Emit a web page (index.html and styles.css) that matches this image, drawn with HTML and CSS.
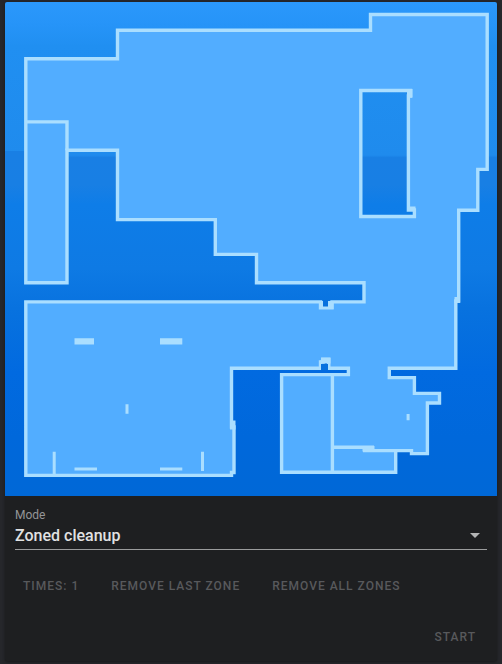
FILE: index.html
```html
<!DOCTYPE html>
<html lang="en">
<head>
<meta charset="utf-8">
<meta name="viewport" content="width=device-width, initial-scale=1">
<title>Vacuum map</title>
<link rel="stylesheet" href="styles.css">
</head>
<body>
<main class="card">
  <svg class="map" viewBox="5 2 492 494" role="img" aria-label="Floor map">
    <defs>
      <linearGradient id="floor" gradientUnits="userSpaceOnUse" x1="0" y1="2" x2="0" y2="496">
        <stop offset="0" stop-color="#2b98fb"/>
        <stop offset=".045" stop-color="#2694f8"/>
        <stop offset=".09" stop-color="#208ff1"/>
        <stop offset=".31" stop-color="#1f8bed"/>
        <stop offset=".315" stop-color="#197fe4"/>
        <stop offset=".37" stop-color="#187fe4"/>
        <stop offset=".41" stop-color="#0e7de8"/>
        <stop offset=".54" stop-color="#0e7ae4"/>
        <stop offset=".62" stop-color="#0872df"/>
        <stop offset=".75" stop-color="#016ae0"/>
        <stop offset=".88" stop-color="#0068db"/>
        <stop offset="1" stop-color="#0068d7"/>
      </linearGradient>
    </defs>
    <rect x="5" y="2" width="492" height="494" fill="url(#floor)"/>
    <path d="M5 151H26V158H5Z" fill="#197fe4"/>
    <g class="rooms">
      <path fill-rule="evenodd" d="M25.8 58.7H117.5V30.2H370.5V14.5H487.2V169.4H477.8V210.3H458.7V301H455.8V368.3H389.3V377.6H414.4V393.4H439.5V403H427.4V453.6H411.5V450.6H395.7V472.2H281.6V374.6H348.4V368.3H328.8V359.5H323V362H320.5V368.3H231.5V427H234V472.5H231.5V475.4H25.8V301.9H320.5V307.8H332V301.9H364V282.8H256.5V254.4H215.3V219.6H117.5V150.3H67V282.8H25.8Z M360.8 90.5H410.5V96H408.4V210H414.4V216.5H360.8Z"/>
      <path class="wall" d="M25.8 121.9H67V150.3M332.4 374.6V472.2M332.4 447.2H374M363 450.6H395.7"/>
    </g>
    <g class="marks">
      <path d="M320 301H323V306.500H328V301H333.500V309H319.500V301Z"/>
      <path d="M321 357.500H330.500V363.500H328V363.500H320V360.500H321Z"/>
      <path d="M407 89H412.500V97.500H407ZM407 206.500H415.500V211H407ZM454.500 297H460V303H454.500ZM230 420.500H235.500V429.500H230ZM362.500 446H374.500V451.500H362.500Z"/>
      <path d="M74.500 338.300H94V344.500H74.500ZM160 338.300H182.300V344.500H160ZM125.500 404.300H128.500V413.700H125.500ZM52.700 451.700H55.700V475H52.700ZM201 451.700H204V471H201ZM74.500 467.600H97V470.600H74.500ZM160 467.600H182.300V470.600H160ZM406.600 414H409.600V420.300H406.600Z"/>
    </g>
    <path d="M323 300H328V306.500H323ZM321 364H328V370H321Z" class="door"/>
  </svg>
  <form class="controls">
    <label class="label" for="mode">Mode</label>
    <div class="field">
      <select id="mode" class="select">
        <option>Zoned cleanup</option>
      </select>
      <svg class="arrow" viewBox="0 0 10 5" aria-hidden="true"><path d="M0 0H10L5 5Z"/></svg>
    </div>
    <div class="actions">
      <button class="button" type="button" disabled>TIMES: 1</button>
      <button class="button" type="button" disabled>REMOVE LAST ZONE</button>
      <button class="button" type="button" disabled>REMOVE ALL ZONES</button>
    </div>
    <div class="actions actions-end">
      <button class="button" type="button" disabled>START</button>
    </div>
  </form>
</main>
</body>
</html>
```
FILE: styles.css
```css
* {
  box-sizing: border-box;
}

body {
  margin: 0;
  padding: 2px 5px 4px;
  background: #26272b;
  font-family: Roboto, "Liberation Sans", sans-serif;
}

.card {
  overflow: hidden;
  border-radius: 2px;
  background: #1e1f21;
  box-shadow: 0 1px 3px #17181a;
}

.map {
  display: block;
  width: 100%;
}

.rooms {
  fill: #52adff;
  stroke: #aadeff;
  stroke-width: 3.4;
}

.rooms .wall {
  fill: none;
}

.marks {
  fill: #aadeff;
}

.door {
  fill: #0771de;
}

.controls {
  padding: 12px 10px 6px;
}

.label {
  display: block;
  color: #949597;
  font-size: 12px;
  line-height: 14px;
}

.field {
  display: flex;
  align-items: center;
  height: 28px;
  padding-right: 7px;
  border-bottom: 1px solid #9b9c9d;
}

.select {
  flex: 1;
  min-width: 0;
  padding: 0;
  border: 0;
  outline: 0;
  appearance: none;
  background: transparent;
  color: #e1e2e3;
  font: 500 16px/24px Roboto, "Liberation Sans", sans-serif;
}

.arrow {
  width: 10px;
  height: 5px;
  fill: #b4b5b6;
}

.actions {
  display: flex;
  gap: 16px;
  margin-top: 18px;
}

.actions-end {
  justify-content: flex-end;
  margin-top: 15px;
  padding-right: 3px;
}

.button {
  height: 36px;
  padding: 0 8px;
  border: 0;
  background: transparent;
  color: #58595c;
  font: 500 12px/36px Roboto, "Liberation Sans", sans-serif;
  letter-spacing: 1px;
  white-space: nowrap;
}
```
